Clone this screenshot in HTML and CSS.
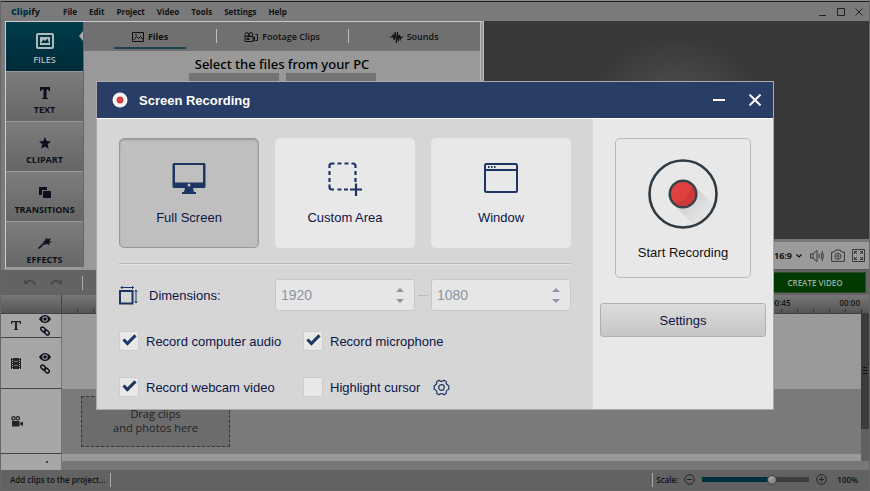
FILE: index.html
```html
<!DOCTYPE html>
<html lang="en">
<head>
  <meta charset="UTF-8">
  <meta name="viewport" content="width=device-width, initial-scale=1.0">
  <title>Clipify - Screen Recording</title>
  <link rel="stylesheet" href="styles.css">
</head>
<body>
  <!-- Shared icons -->
  <svg class="sprite" aria-hidden="true">
    <symbol id="eye" viewBox="0 0 12 8">
      <path d="M0 4C2 1 4 0 6 0s4 1 6 4C10 7 8 8 6 8S2 7 0 4z"/>
      <circle cx="6" cy="4" r="2.700" fill="#a6a6a6"/>
      <circle cx="6" cy="4" r="1.700"/>
    </symbol>
    <symbol id="chain" viewBox="0 0 10 10">
      <g fill="none" stroke="currentColor" stroke-width="1.500">
        <rect x="0.500" y="1.600" width="5.500" height="3.400" rx="1.700" transform="rotate(45 3 3.300)"/>
        <rect x="4" y="5" width="5.500" height="3.400" rx="1.700" transform="rotate(45 7 6.700)"/>
      </g>
    </symbol>
  </svg>

  <div class="app">
    <header class="menubar">
      <span class="logo"><b>Clip</b>ify</span>
      <nav class="menu">
        <a href="#">File</a>
        <a href="#">Edit</a>
        <a href="#">Project</a>
        <a href="#">Video</a>
        <a href="#">Tools</a>
        <a href="#">Settings</a>
        <a href="#">Help</a>
      </nav>
      <div class="window-buttons">
        <button aria-label="Minimize"><svg width="10" height="10"><path d="M1 8.500h7"/></svg></button>
        <button aria-label="Maximize"><svg width="10" height="10"><path d="M1.500 1.500h7v7h-7z"/></svg></button>
        <button aria-label="Close"><svg width="10" height="10"><path d="M1.500 1.500l7 7M8.500 1.500l-7 7"/></svg></button>
      </div>
    </header>

    <main class="workspace">
      <section class="library">
        <nav class="sidebar">
          <button class="side-item active">
            <svg width="18" height="16" viewBox="0 0 18 16"><path fill-rule="evenodd" d="M2 0h14a2 2 0 0 1 2 2v12a2 2 0 0 1-2 2H2a2 2 0 0 1-2-2V2a2 2 0 0 1 2-2zM2 2v12h14V2z"/><path d="M4 4h10v8H4z"/><path fill="#00333f" d="M5 10l2.500-3.500L9 8l2.500-2.500L13 10z"/></svg>
            FILES
          </button>
          <button class="side-item">
            <svg width="10" height="12" viewBox="0 0 10 12"><path d="M0 0h10v4H8.500V2.500h-2V11H8v1H2v-1h1.500V2.500h-2V4H0z"/></svg>
            TEXT
          </button>
          <button class="side-item">
            <svg width="12" height="12" viewBox="0 0 12 12"><path d="M6 0l1.700 4.100 4.300.4-3.300 2.800 1 4.500L6 9.400l-3.700 2.400 1-4.500L0 4.500l4.300-.4z"/></svg>
            CLIPART
          </button>
          <button class="side-item">
            <svg width="12" height="12" viewBox="0 0 12 12"><path d="M0 0h8v3H3v5H0z"/><path d="M4 4h8v7H4z"/></svg>
            TRANSITIONS
          </button>
          <button class="side-item">
            <svg width="14" height="12" viewBox="0 0 14 12"><path d="M0 11l6-6 1.200 1.200-6 5.800z"/><path d="M9 0l.6 2.600L13 1l-1.600 3L14 5.500l-3 .3.5 2.700L9 6.800 6.500 8l.4-2.600L5 4.300l2.400-.8L7 1l1.600 1.600z"/></svg>
            EFFECTS
          </button>
        </nav>
        <div class="library-main">
          <nav class="tabs">
            <button class="tab active">
              <svg width="12" height="10" viewBox="0 0 12 10"><path fill="none" stroke="currentColor" d="M.5.5h11v9H.5z"/><path fill="none" stroke="currentColor" d="M1.500 8l3-3.500 2 2L8.500 4.500 11 7.500"/><circle cx="4" cy="2.700" r=".8"/></svg>
              <span>Files</span>
            </button>
            <button class="tab">
              <svg width="14" height="10" viewBox="0 0 14 10"><g fill="none" stroke="currentColor"><circle cx="2.800" cy="2.500" r="1.900"/><circle cx="7" cy="2.500" r="1.900"/><path d="M1 4.500h8v5H1zM9 6l1.500-1v4L9 8M11.500 2.500h2v6h-2"/></g><path d="M2.500 6h3v2h-3z"/></svg>
              <span>Footage Clips</span>
            </button>
            <button class="tab">
              <svg width="13" height="12" viewBox="0 0 13 12"><path fill="none" stroke="currentColor" stroke-width="1.100" d="M0 6h2l1-2 1 5 1.200-8L6.500 12 7.500 1l1 9 1-6 .9 4 .6-2h2"/></svg>
              <span>Sounds</span>
            </button>
          </nav>
          <h2>Select the files from your PC</h2>
          <div class="file-actions">
            <button aria-label="Add files"></button>
            <button aria-label="Add folder"></button>
          </div>
        </div>
      </section>

      <section class="preview">
        <div class="screen"></div>
        <div class="player-bar">
          <select aria-label="Aspect ratio">
            <option>16:9</option>
            <option>4:3</option>
          </select>
          <svg class="chevron" width="6" height="4" viewBox="0 0 6 4"><path d="M.5.5L3 3 5.500.5" fill="none" stroke="#111" stroke-width="1.200"/></svg>
          <button aria-label="Volume"><svg width="14" height="12" viewBox="0 0 14 12"><path d="M.5 4v4H3l4 3.500V.5L3 4zM3 4v4M9 4v4M11 3q1.500 3 0 6M12 1q3 5 0 10"/></svg></button>
          <button aria-label="Snapshot"><svg width="14" height="13" viewBox="0 0 14 13"><path d="M.6 3h3l1-2h4.800l1 2h3v9.400H.6z"/><circle cx="7" cy="7.300" r="3"/><circle cx="7" cy="7.300" r="1"/></svg></button>
          <button aria-label="Full screen"><svg width="13" height="13" viewBox="0 0 13 13"><path d="M.5.5h12v12H.5zM5 2.500H2.500V5M8 2.500h2.500V5M5 10.500H2.500V8M8 10.500h2.500V8M2.500 2.500L5 5M10.500 2.500L8 5M2.500 10.500L5 8M10.500 10.500L8 8"/></svg></button>
        </div>
      </section>
    </main>

    <div class="toolbar">
      <button class="tool" aria-label="Undo"><svg width="12" height="7" viewBox="0 0 12 7"><path d="M0 0v5h5L3.400 3.500Q8 1 10.500 6L12 5.500Q9-1 2 2z"/></svg></button>
      <button class="tool" aria-label="Redo"><svg width="12" height="7" viewBox="0 0 12 7"><path d="M12 0v5H7l1.600-1.500Q4 1 1.500 6L0 5.500Q3-1 10 2z"/></svg></button>
      <span class="separator"></span>
      <button class="create">CREATE VIDEO</button>
    </div>

    <div class="ruler">
      <div class="ticks"><span>00:45</span><span>00:00</span></div>
    </div>

    <section class="timeline">
      <div class="track text-track">
        <div class="track-head">
          <svg width="10" height="9" viewBox="0 0 10 9"><path d="M0 0h10v3H9L8.500 1.300H6V8h1.200v1H2.800V8H4V1.300H1.500L1 3H0z"/></svg>
          <div class="toggles">
            <svg width="12" height="8"><use href="#eye"/></svg>
            <svg width="10" height="10"><use href="#chain"/></svg>
          </div>
        </div>
        <div class="lane"></div>
      </div>
      <div class="track image-track">
        <div class="track-head">
          <svg width="10" height="11" viewBox="0 0 10 11"><path d="M0 0h10v11H0z"/><path d="M1.500 0v11M8.500 0v11" stroke="#a6a6a6" stroke-dasharray="1 1"/><path d="M3 3.500h4M3 7.500h4" stroke="#777"/></svg>
          <div class="toggles">
            <svg width="12" height="8"><use href="#eye"/></svg>
            <svg width="10" height="10"><use href="#chain"/></svg>
          </div>
        </div>
        <div class="lane"></div>
      </div>
      <div class="track video-track">
        <div class="track-head">
          <svg width="12" height="11" viewBox="0 0 12 11"><g fill="none" stroke="currentColor" stroke-width="1.200"><circle cx="2.500" cy="2.300" r="1.700"/><circle cx="6.800" cy="2.300" r="1.700"/></g><path d="M1 5h7.500v5.500H1zM9 7l3-1.500v4.500L9 8.500z"/></svg>
        </div>
        <div class="lane">
          <div class="dropzone">Drag clips<br>and photos here</div>
        </div>
      </div>
      <div class="track sound-track">
        <div class="track-head"><span class="dot"></span></div>
        <div class="lane"></div>
      </div>
      <div class="scrollbar"><span class="grip"></span></div>
    </section>

    <footer class="statusbar">
      <span class="message">Add clips to the project...</span>
      <span class="separator"></span>
      <div class="scale">
        <span class="separator"></span>
        <label for="scale">Scale:</label>
        <button aria-label="Zoom out"><svg width="11" height="11"><circle cx="5.500" cy="5.500" r="4.800"/><path d="M3 5.500h5"/></svg></button>
        <input type="range" id="scale" min="0" max="100" value="67">
        <button aria-label="Zoom in"><svg width="11" height="11"><circle cx="5.500" cy="5.500" r="4.800"/><path d="M3 5.500h5M5.500 3v5"/></svg></button>
        <output for="scale">100%</output>
      </div>
    </footer>
  </div>

  <!-- Screen recording window -->
  <div class="overlay">
    <div class="dialog" role="dialog" aria-labelledby="dialog-title">
      <header class="dialog-header">
        <svg width="16" height="16"><circle cx="8" cy="8" r="7.500" fill="#f5f5f5"/><circle cx="8" cy="8" r="3.500" fill="#d9403f"/></svg>
        <h1 id="dialog-title">Screen Recording</h1>
        <button aria-label="Minimize"><svg width="12" height="12"><path d="M0 6h12"/></svg></button>
        <button aria-label="Close"><svg width="12" height="12"><path d="M.5.5l11 11M11.500.5l-11 11"/></svg></button>
      </header>
      <div class="dialog-body">
        <div class="options">
          <div class="modes">
            <button class="mode selected">
              <svg width="34" height="34" viewBox="0 0 34 34"><path fill-rule="evenodd" d="M2 1h30a1.500 1.500 0 0 1 1.500 1.500v22A1.500 1.500 0 0 1 32 26H21l1 4h2v2H10v-2h2l1-4H2a1.500 1.500 0 0 1-1.500-1.500v-22A1.500 1.500 0 0 1 2 1zM3 3v17.500h28V3z"/><circle cx="17" cy="23" r="1.500" fill="#bfbfbf"/></svg>
              Full Screen
            </button>
            <button class="mode">
              <svg width="34" height="34" viewBox="0 0 34 34"><g fill="none" stroke="currentColor" stroke-width="2.200"><path d="M1.500 6V4Q1.500 1.500 4 1.500h2.500M9.500 1.500h4M16.500 1.500h4M23.500 1.500H25q2.500 0 2.500 2.500v2M27.500 9v4M27.500 16v4M1.500 9v4M1.500 16v4M1.500 22.500V25q0 2.500 2.500 2.500h2M9.500 27.500h4M16 27.500h4M22 27.500h12M28 21.500V34"/></g></svg>
              Custom Area
            </button>
            <button class="mode">
              <svg width="34" height="34" viewBox="0 0 34 34"><g fill="none" stroke="currentColor" stroke-width="2"><rect x="1" y="2" width="32" height="28" rx="1.500"/><path d="M1 8h32"/></g><path d="M4 4h1.500v2H4zM7 4h1.500v2H7zM10 4h1.500v2H10z"/></svg>
              Window
            </button>
          </div>
          <hr>
          <div class="dimensions">
            <span class="dim-label">
              <svg width="19" height="19" viewBox="0 0 19 19"><g fill="none" stroke="currentColor"><path stroke-width="2" d="M1 5h12.500v12.500H1z"/><path d="M2 1.500h12.500M3.500 0L2 1.500 3.500 3M13 0l1.500 1.500L13 3M17 4v13M15.500 5.500L17 4l1.500 1.500M15.500 15.500L17 17l1.500-1.500"/></g></svg>
              Dimensions:
            </span>
            <div class="number">
              <input type="number" aria-label="Width" value="1920" disabled>
              <svg width="8" height="17" viewBox="0 0 8 17"><path d="M0 5l4-4 4 4zM0 12l4 4 4-4z"/></svg>
            </div>
            <div class="number">
              <input type="number" aria-label="Height" value="1080" disabled>
              <svg width="8" height="17" viewBox="0 0 8 17"><path d="M0 5l4-4 4 4zM0 12l4 4 4-4z"/></svg>
            </div>
          </div>
          <div class="checks">
            <label><input type="checkbox" checked>Record computer audio</label>
            <label><input type="checkbox" checked>Record microphone</label>
            <label><input type="checkbox" checked>Record webcam video</label>
            <div class="check-with-gear">
              <label><input type="checkbox">Highlight cursor</label>
              <button aria-label="Cursor settings"><svg width="17" height="17" viewBox="0 0 17 17"><g fill="none" stroke="currentColor" stroke-width="1.200"><circle cx="8.500" cy="8.500" r="2.800"/><path d="M6 1.200q2.500 2.200 5 0l2.200 1.300q-.4 3.200 2.600 4.200v3.600q-3 1-2.600 4.200L11 15.800q-2.500-2.200-5 0l-2.200-1.300q.4-3.200-2.600-4.200V6.700q3-1 2.600-4.200z"/></g></svg></button>
            </div>
          </div>
        </div>
        <aside class="actions">
          <button class="record">
            <svg width="70" height="70" viewBox="0 0 70 70">
              <defs>
                <linearGradient id="shade" x1="0" y1="0" x2="1" y2="1">
                  <stop offset=".3" stop-color="#cfcfcf"/>
                  <stop offset=".85" stop-color="#e8e8e8"/>
                </linearGradient>
              </defs>
              <path d="M25 45l20-20 21 21A33 33 0 0 1 46 66z" fill="url(#shade)"/>
              <circle cx="35" cy="35" r="33.500" fill="none" stroke="#2f3a42" stroke-width="2.600"/>
              <circle cx="35" cy="35" r="13.200" fill="#e0403f" stroke="#37434b" stroke-width="2.600"/>
              <path d="M43.500 26.500A12 12 0 0 1 26.500 43.500Q41 42 43.500 26.500z" fill="#cf3838"/>
            </svg>
            Start Recording
          </button>
          <button class="settings">Settings</button>
        </aside>
      </div>
    </div>
  </div>
</body>
</html>
```
FILE: styles.css
```css
* {
  box-sizing: border-box;
}

body {
  margin: 0;
  font-family: "Open Sans", "Noto Sans", sans-serif;
  font-size: 9px;
  font-weight: 600;
  color: #111;
  background-color: #7a7a7a;
}

button,
input,
select {
  font: inherit;
  color: inherit;
  margin: 0;
  padding: 0;
  border: none;
  background: none;
}

button {
  cursor: pointer;
}

svg {
  display: block;
  flex: none;
  fill: currentColor;
}

.sprite {
  position: absolute;
  width: 0;
  height: 0;
}

/* Main editor window */
.app {
  display: flex;
  flex-direction: column;
  min-height: 100vh;
  border: 1px solid #666;
  border-top-color: #888;
}

.menubar {
  display: flex;
  align-items: center;
  height: 20px;
  padding: 0 5px 0 10px;
  border-top: 1px solid #222;
  background-color: #7a7a7a;
}

.logo {
  width: 52px;
  font-size: 9px;
  font-weight: 700;
}

.logo b {
  color: #003747;
}

.menu {
  display: flex;
  gap: 12px;
  font-size: 8px;
  font-weight: 700;
}

.menu a {
  color: #111;
  text-decoration: none;
}

.window-buttons {
  display: flex;
  gap: 8px;
  margin-left: auto;
}

.window-buttons svg {
  fill: none;
  stroke: #222;
}

.workspace {
  display: flex;
  height: 249px;
}

.library {
  display: flex;
  flex: none;
  width: 55.2%;
  margin-left: 4px;
  border: 1px solid #ccc;
  border-right: 4px double #bbb;
  border-bottom: 3px solid #999;
  background-color: #999;
}

.sidebar {
  display: flex;
  flex-direction: column;
  flex: none;
  width: 78px;
  overflow: hidden;
  border-right: 1px solid #666;
}

.side-item {
  position: relative;
  display: flex;
  flex: none;
  flex-direction: column;
  align-items: center;
  justify-content: flex-end;
  gap: 4px;
  height: 50px;
  padding-bottom: 5px;
  border-bottom: 1px solid #999;
  background: linear-gradient(#7d7d7d, #656565);
  color: #0b101c;
  font-weight: 700;
}

.side-item.active {
  background: linear-gradient(#003c4a, #002c3a);
  color: #b0b8bc;
  font-weight: 600;
}

.side-item.active::after {
  content: "";
  position: absolute;
  top: 9px;
  right: 0;
  border: 5px solid transparent;
  border-right: 4px solid #aaa;
  border-left: none;
}

.library-main {
  flex: 1;
  overflow: hidden;
}

.tabs {
  display: grid;
  grid-template-columns: repeat(3, 1fr);
  height: 29px;
  background-color: #707070;
}

.tab {
  position: relative;
  display: flex;
  align-items: center;
  justify-content: center;
  gap: 4px;
}

.tab + .tab::before {
  content: "";
  position: absolute;
  top: 7px;
  left: 0;
  height: 14px;
  border-left: 1px solid #bbb;
}

.tab.active {
  font-weight: 700;
}

.tab.active::after {
  content: "";
  position: absolute;
  bottom: 2px;
  left: 30px;
  right: 30px;
  height: 2px;
  background-color: #1d444e;
}

.library-main h2 {
  margin: 4px 0 0;
  color: #000;
  font-family: "Noto Sans", "Open Sans", sans-serif;
  font-size: 13px;
  font-weight: 500;
  line-height: 18px;
  text-align: center;
}

.file-actions {
  display: flex;
  justify-content: center;
  gap: 7px;
}

.file-actions button {
  width: 90px;
  height: 28px;
  background-color: #747474;
}

.preview {
  display: flex;
  flex: 1;
  flex-direction: column;
}

.screen {
  flex: 1;
  background: radial-gradient(circle at 50% 50%, #585858, #383838 96px);
}

.player-bar {
  display: flex;
  align-items: center;
  justify-content: flex-end;
  height: 31px;
  padding: 0 4px;
  border-top: 3px solid #777;
  border-bottom: 1px solid #555;
  background-color: #9a9a9a;
}

.player-bar select {
  appearance: none;
  font-size: 9px;
  font-weight: 700;
}

.player-bar button {
  margin-left: 7px;
}

.player-bar .chevron {
  margin: 0 1px 0 3px;
}

.player-bar button svg {
  fill: none;
  stroke: #3a3a3a;
}

.toolbar {
  display: flex;
  align-items: center;
  height: 25px;
  padding: 0 3px 0 23px;
  background-color: #636363;
}

.tool {
  margin-right: 14px;
  color: #484848;
}

.separator {
  height: 14px;
  border-left: 1px solid #aaa;
}

.toolbar .separator {
  margin-left: 6px;
}

.create {
  width: 102px;
  height: 21px;
  margin-left: auto;
  background-color: #003a00;
  color: #9fae9f;
  border: 1px solid #2c4a2c;
  font-size: 8px;
}

.ruler {
  height: 19px;
  padding-left: 60px;
  border-bottom: 1px solid #444;
  background: linear-gradient(#777, #555);
}

.ticks {
  display: flex;
  justify-content: flex-end;
  gap: 49px;
  height: 18px;
  padding-right: 9px;
  border-left: 1px solid #444;
  font-size: 8px;
  line-height: 16px;
  background:
    repeating-linear-gradient(90deg, transparent 0 15px, #333 15px 16px) 0 100% / 100% 4px no-repeat,
    repeating-linear-gradient(90deg, transparent 0 3px, #444 3px 4px) 0 100% / 100% 1px no-repeat;
}

.timeline {
  position: relative;
  display: flex;
  flex: 1;
  flex-direction: column;
}

.track {
  display: flex;
}

.track-head {
  display: flex;
  flex: none;
  align-items: center;
  justify-content: space-between;
  width: 61px;
  padding: 0 10px;
  border-right: 1px solid #777;
  border-bottom: 1px solid #444;
  background-color: #a6a6a6;
  color: #222;
}

.toggles {
  display: flex;
  flex-direction: column;
  align-items: center;
  gap: 3px;
  color: #0b101c;
}

.lane {
  flex: 1;
  background-color: #999;
}

.text-track {
  height: 24px;
}

.image-track {
  height: 51px;
}

.video-track {
  height: 65px;
}

.video-track .lane {
  padding: 7px 19px;
  background-color: #7a7a7a;
}

.dropzone {
  width: 149px;
  height: 51px;
  padding-top: 10px;
  border: 1px dashed #333;
  background-color: #6c6c6c;
  color: #222;
  font-size: 11px;
  font-weight: 400;
  line-height: 14px;
  text-align: center;
}

.sound-track {
  flex: 1;
}

.sound-track .track-head {
  justify-content: flex-end;
  border-bottom: none;
}

.dot {
  width: 2px;
  height: 2px;
  margin-right: 3px;
  background-color: #444;
}

.sound-track .lane {
  border-top: 7px solid #999;
  background-color: #777;
}

.scrollbar {
  position: absolute;
  top: 0;
  right: 0;
  bottom: 9px;
  width: 8px;
  border-bottom: 32px solid #606060;
  background-color: #3b3b3b;
}

.grip {
  display: block;
  width: 4px;
  height: 9px;
  margin: 53px auto 0;
  background: repeating-linear-gradient(#111 0 1px, transparent 1px 3px);
}

.statusbar {
  display: flex;
  align-items: center;
  height: 20px;
  padding: 0 11px 1px 9px;
  background-color: #626262;
  font-size: 8px;
}

.message {
  margin-right: 4px;
}

.scale {
  display: flex;
  align-items: center;
  margin-left: auto;
}

.scale label {
  margin: 0 6px 0 3px;
}

.scale button svg {
  fill: none;
  stroke: #222;
}

.scale input {
  appearance: none;
  width: 107px;
  height: 10px;
  margin: 0 7px;
  background: linear-gradient(90deg, #00303d 67%, #3d3d3d 67%) 0 50% / 100% 5px no-repeat;
}

.scale input::-webkit-slider-thumb {
  appearance: none;
  width: 10px;
  height: 10px;
  border: 1px solid #444;
  border-radius: 50%;
  background: radial-gradient(circle at 35% 30%, #aaa, #666);
}

.scale output {
  margin-left: 10px;
}

/* Screen recording dialog */
.overlay {
  position: absolute;
  inset: 0;
  display: grid;
  place-items: center;
}

.dialog {
  width: 90%;
  max-width: 676px;
  background-color: #d6d6d6;
  color: #0c1547;
  font-family: "Liberation Sans", Arial, sans-serif;
  font-size: 13px;
  font-weight: 400;
  box-shadow: 0 0 0 1px #aaa;
}

.dialog-header {
  display: flex;
  align-items: center;
  height: 37px;
  padding: 0 12px 0 15px;
  border-bottom: 1px solid #fff;
  background-color: #2a3d66;
  color: #fff;
}

.dialog-header h1 {
  margin: 0 auto 0 11px;
  font-size: 13px;
  font-weight: 700;
}

.dialog-header button {
  margin-left: 24px;
}

.dialog-header button svg {
  fill: none;
  stroke: #fff;
  stroke-width: 2;
}

.dialog-body {
  display: flex;
}

.options {
  flex: 1;
  min-width: 0;
  padding: 19px 22px 12px;
}

.modes,
.dimensions {
  display: grid;
  grid-template-columns: repeat(3, minmax(0, 1fr));
  gap: 16px;
}

.mode {
  display: flex;
  flex-direction: column;
  align-items: center;
  justify-content: center;
  gap: 14px;
  height: 110px;
  border-radius: 5px;
  background-color: #e8e8e8;
}

.mode svg {
  color: #1c3563;
}

.mode.selected {
  border: 1px solid #999;
  background-color: #bfbfbf;
  box-shadow: inset 0 1px 2px #999;
}

.options hr {
  height: 2px;
  margin: 15px 0 14px;
  border: none;
  border-top: 1px solid #b8b8b8;
  border-bottom: 1px solid #e4e4e4;
}

.dim-label {
  display: flex;
  align-items: center;
  gap: 11px;
}

.dim-label svg {
  color: #1c3563;
}

.number {
  position: relative;
  display: flex;
  align-items: center;
  height: 32px;
  padding: 0 10px 0 5px;
  border: 1px solid #c8c8c8;
  border-radius: 3px;
  background-color: #e6e6e6;
  color: #8c93a5;
}

/* Dash between width and height */
.number + .number::before {
  content: "";
  position: absolute;
  left: -14px;
  width: 10px;
  border-top: 1px solid #bbb;
}

.number input {
  flex: 1;
  min-width: 0;
  font-size: 14px;
  appearance: textfield;
}

.number input::-webkit-inner-spin-button {
  appearance: none;
}

.checks {
  display: grid;
  grid-template-columns: 184px 1fr;
  row-gap: 26px;
  margin-top: 20px;
}

.checks label {
  display: flex;
  align-items: center;
  gap: 7px;
  white-space: nowrap;
}

.checks input {
  appearance: none;
  display: grid;
  place-items: center;
  width: 20px;
  height: 20px;
  border: 1px solid #ccc;
  border-radius: 2px;
  background-color: #e8e8e8;
}

.checks input:checked::before {
  content: "";
  width: 10px;
  height: 4px;
  margin-bottom: 5px;
  border: solid #1c3563;
  border-width: 0 0 3px 3px;
  transform: rotate(-45deg);
}

.check-with-gear {
  display: flex;
  align-items: center;
  gap: 13px;
}

.check-with-gear svg {
  color: #1c3563;
}

.actions {
  display: flex;
  flex: none;
  flex-direction: column;
  align-items: center;
  gap: 25px;
  width: 180px;
  padding: 19px 7px;
  background-color: #e8e8e8;
}

.record {
  display: flex;
  flex-direction: column;
  align-items: center;
  gap: 16px;
  width: 136px;
  height: 140px;
  padding-top: 20px;
  border: 1px solid #b8b8b8;
  border-radius: 5px;
  color: #111;
}

.settings {
  width: 100%;
  height: 34px;
  border: 1px solid #b0b0b0;
  border-radius: 3px;
  background: linear-gradient(#dcdcdc, #c6c6c6);
}
```
